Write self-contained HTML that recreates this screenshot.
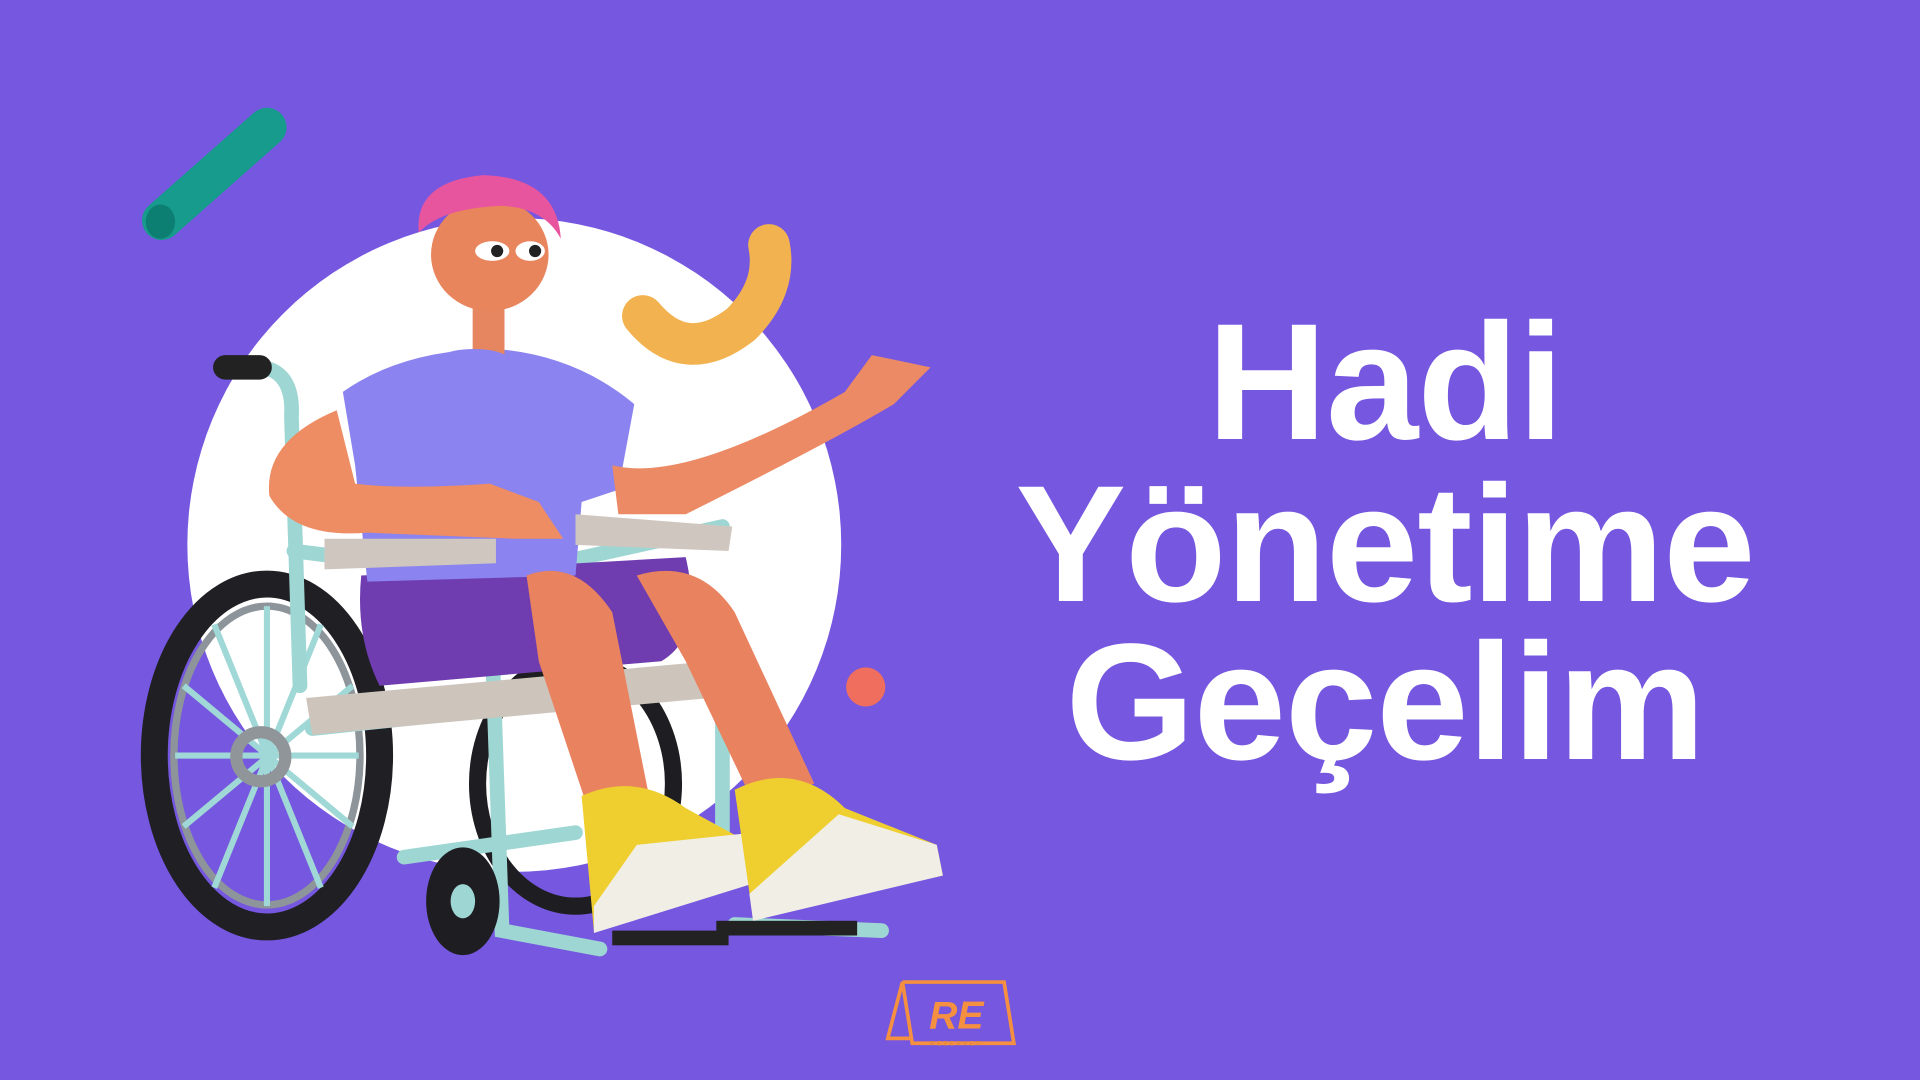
<!DOCTYPE html>
<html><head><meta charset="utf-8"><style>
html,body{margin:0;padding:0;}
body{width:1920px;height:1080px;background:#7657e0;overflow:hidden;position:relative;font-family:"Liberation Sans",sans-serif;}
svg{position:absolute;left:0;top:0;}
.t{position:absolute;left:1000px;width:770px;text-align:center;color:#fff;font-weight:bold;font-size:166px;line-height:1;letter-spacing:-1px;}
</style></head><body>
<svg width="1920" height="1080" viewBox="0 0 1568 882">
<circle cx="420" cy="445" r="267" fill="#fff"/>
<line x1="132" y1="180" x2="218" y2="104" stroke="#169b8c" stroke-width="32" stroke-linecap="round"/>
<ellipse cx="131" cy="181" rx="12" ry="14" fill="#0d7f72"/>
<path d="M525 258 Q560 300 605 265 Q635 235 628 200" fill="none" stroke="#f2b24f" stroke-width="34" stroke-linecap="round"/>
<circle cx="707" cy="561" r="16" fill="#ef6e5e"/>
<!-- back wheel -->
<ellipse cx="470" cy="640" rx="80" ry="100" fill="none" stroke="#1e1e22" stroke-width="14"/>
<!-- big wheel -->
<ellipse cx="218" cy="617" rx="92" ry="140" fill="none" stroke="#1f1f24" stroke-width="22"/>
<ellipse cx="218" cy="617" rx="76" ry="122" fill="none" stroke="#8d949a" stroke-width="6"/>
<g stroke="#9fd8d6" stroke-width="5">
<line x1="218" y1="495" x2="218" y2="740"/><line x1="150" y1="560" x2="288" y2="675"/><line x1="150" y1="675" x2="288" y2="560"/><line x1="175" y1="510" x2="262" y2="725"/><line x1="262" y1="510" x2="175" y2="725"/><line x1="143" y1="617" x2="293" y2="617"/>
</g>
<circle cx="213" cy="618" r="20" fill="none" stroke="#8f9599" stroke-width="10"/>
<!-- frame -->
<g fill="none" stroke="#9ed6d3" stroke-width="12" stroke-linecap="round">
<path d="M215 300 Q240 305 238 340 L245 560"/>
<path d="M240 450 L400 470 L410 760 L490 775"/>
<path d="M410 470 L590 430"/>
<path d="M255 595 L590 560 L590 700"/>
<path d="M330 700 L470 680"/>
<path d="M600 755 L720 760"/>
</g>
<rect x="174" y="290" width="48" height="20" rx="10" fill="#222"/>
<!-- small wheel -->
<ellipse cx="378" cy="736" rx="30" ry="44" fill="#1e1e22"/>
<ellipse cx="378" cy="736" rx="10" ry="14" fill="#9ed6d3"/>
<!-- seat -->
<path d="M250 570 L580 540 L580 570 L255 600 Z" fill="#cdc5bc"/>
<!-- shorts -->
<path d="M295 470 L560 455 Q575 520 540 540 L310 560 Q290 520 295 470 Z" fill="#6f3db0"/>
<!-- shirt -->
<path d="M280 320 Q330 285 405 285 Q470 290 518 330 L505 400 L475 410 L470 470 L300 475 L290 380 Z" fill="#8b83ef"/>
<!-- back arm -->
<path d="M500 380 Q560 395 690 320 L712 290 L760 300 L730 330 Q680 360 560 420 L505 420 Z" fill="#eb8a64"/>
<!-- front arm -->
<path d="M275 335 Q215 360 220 405 Q240 440 300 435 L420 440 L460 440 L440 410 L400 395 Q330 400 290 395 Z" fill="#ee8d63"/>
<!-- armrests -->
<path d="M265 440 L405 440 L405 460 L265 465 Z" fill="#cfc7bf"/>
<path d="M470 420 L598 430 L595 450 L470 445 Z" fill="#cfc7bf"/>
<!-- legs -->
<path d="M430 470 Q470 455 500 500 L530 650 L480 660 L440 540 Z" fill="#e9825f"/>
<path d="M520 470 Q570 455 600 500 L665 640 L615 655 L560 540 Z" fill="#e9825f"/>
<!-- shoes -->
<path d="M475 650 Q520 630 560 660 L615 690 L620 720 L485 760 Z" fill="#eecf2f"/>
<path d="M520 690 L615 680 L620 720 L485 762 L485 740 Z" fill="#f1eee6"/>
<path d="M600 645 Q650 620 690 660 L765 690 L770 715 L615 750 Z" fill="#eecf2f"/>
<path d="M685 665 L765 690 L770 715 L615 752 L612 730 Z" fill="#f1eee6"/>
<rect x="500" y="760" width="95" height="12" fill="#222"/>
<rect x="585" y="752" width="115" height="12" fill="#222"/>
<!-- neck/head -->
<rect x="386" y="235" width="26" height="55" fill="#e58660"/>
<ellipse cx="387" cy="295" rx="30" ry="10" fill="#8b83ef"/>
<ellipse cx="400" cy="208" rx="48" ry="46" fill="#e8855d"/>
<path d="M342 190 Q338 148 395 143 Q455 145 458 195 Q445 170 410 168 Q360 170 342 190 Z" fill="#e8559f"/>
<ellipse cx="402" cy="205" rx="14" ry="8" fill="#fff"/><circle cx="406" cy="205" r="5" fill="#222"/>
<ellipse cx="433" cy="205" rx="12" ry="8" fill="#fff"/><circle cx="437" cy="205" r="5" fill="#222"/>
<!-- logo -->
<g fill="none" stroke="#f4903f" stroke-width="3">
<path d="M737 802 L820 802 L828 852 L745 852 L737 802 L725 848 L745 848"/>
</g>
<text x="781" y="840" text-anchor="middle" font-family="Liberation Sans" font-weight="bold" font-size="32" fill="#f4903f" font-style="italic">RE</text>
<text x="781" y="854" text-anchor="middle" font-family="Liberation Sans" font-size="5" letter-spacing="2" fill="#d08040">REZERVET</text>
</svg>
<div class="t" style="top:300px">Hadi</div>
<div class="t" style="top:462px">Yönetime</div>
<div class="t" style="top:620px">Geçelim</div>
</body></html>
